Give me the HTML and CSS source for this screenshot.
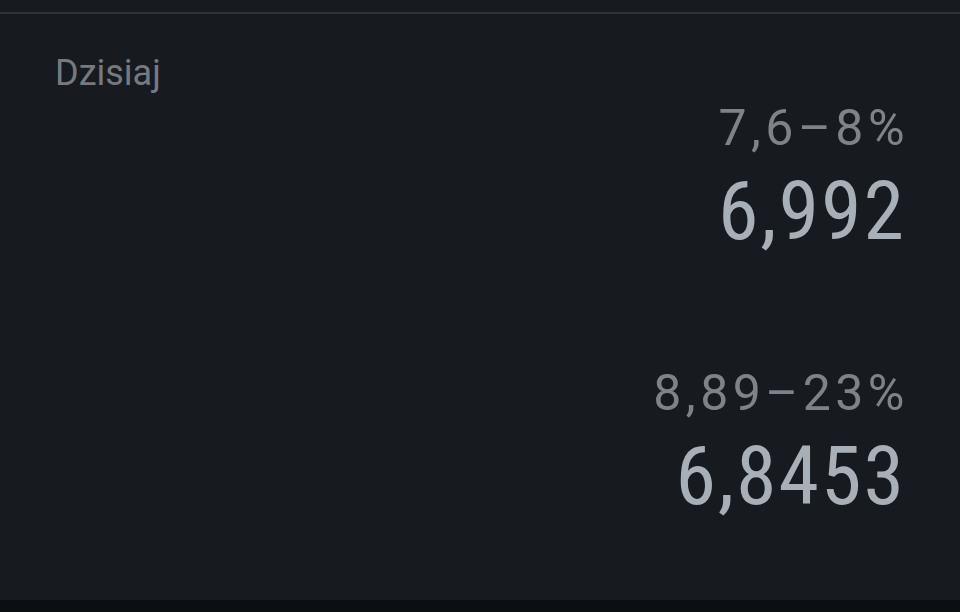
FILE: index.html
```html
<!DOCTYPE html>
<html lang="pl">
<head>
  <meta charset="UTF-8">
  <meta name="viewport" content="width=device-width, initial-scale=1.0">
  <title>Kursy dzisiaj</title>
  <link rel="stylesheet" href="styles.css">
</head>
<body>
  <!-- Pasek nad kartą -->
  <div class="top-strip"></div>

  <main class="rates-card">
    <div class="rates-title">Dzisiaj</div>

    <!-- Pierwsza pozycja -->
    <div class="rate">
      <div class="rate-range">7,6–8%</div>
      <div class="rate-value">6,992</div>
    </div>

    <!-- Druga pozycja -->
    <div class="rate">
      <div class="rate-range">8,89–23%</div>
      <div class="rate-value">6,8453</div>
    </div>
  </main>

  <div class="bottom-strip"></div>
</body>
</html>
```

FILE: styles.css
```css
* {
  box-sizing: border-box;
}

body {
  margin: 0;
  min-height: 100vh;
  display: flex;
  flex-direction: column;
  background: #171b1f;
  font-family: Roboto, "Noto Sans", sans-serif;
}

/* Cienka linia u góry */
.top-strip {
  height: 14px;
  border-bottom: 2px solid #2f3337;
}

.rates-card {
  flex: 1;
  display: flex;
  flex-direction: column;
  padding: 41px 56px 0 55px;
}

.rates-title {
  font-size: 36px;
  line-height: 36px;
  font-weight: 380;
  color: #767a7f;
}

.rate {
  display: flex;
  flex-direction: column;
  align-items: flex-end;
  gap: 17px;
  margin-top: 12px;
}

.rate + .rate {
  margin-top: 116px;
}

/* Zakres procentowy - szerokie odstępy */
.rate-range {
  font-size: 50px;
  line-height: 50px;
  font-weight: 380;
  letter-spacing: 4.5px;
  margin-right: -5px;
  color: #7f8389;
}

/* Główna wartość - węższy krój */
.rate-value {
  font-size: 82px;
  line-height: 82px;
  font-weight: 370;
  font-stretch: 87%;
  letter-spacing: 2px;
  margin-right: -2px;
  color: #a9afb7;
}

.bottom-strip {
  height: 12px;
  background: #0c0f12;
}
```
